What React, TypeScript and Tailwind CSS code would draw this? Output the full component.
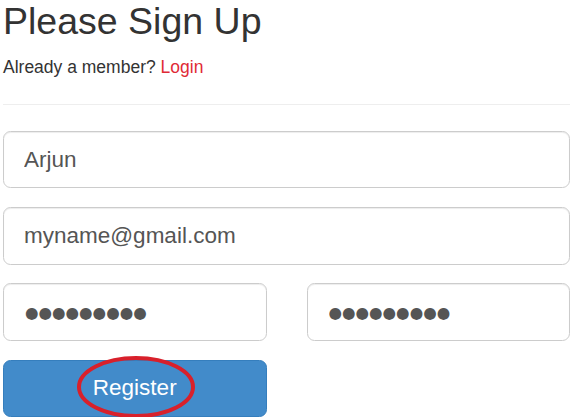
import React from "react";

export default function App() {
  const font = { fontFamily: '"Liberation Sans", Arial, Helvetica, sans-serif' };
  const inputCls =
    "block w-full h-[57.5px] px-[20px] text-[22.5px] text-[#555] border border-[#ccc] rounded-[7.5px] shadow-[inset_0_1px_1px_rgba(0,0,0,0.075)] outline-none bg-white";
  const pwCls =
    "block w-full h-[57.5px] pl-[21px] pr-[20px] pt-[2px] text-[15.5px] text-[#555] border border-[#ccc] rounded-[7.5px] shadow-[inset_0_1px_1px_rgba(0,0,0,0.075)] outline-none bg-white [font-family:'DejaVu_Sans',sans-serif]";
  return (
    <div className="w-[574px] h-[417px] overflow-hidden bg-white" style={font}>
      <div className="ml-[3px] w-[567px] pt-[1px]">
        <h2 className="text-[37.5px] leading-[41.25px] text-[#333] font-normal m-0">Please Sign Up</h2>
        <p className="mt-[12.5px] text-[17.5px] leading-[25px] text-[#333]">
          Already a member? <a className="text-[#df2a35]">Login</a>
        </p>
        <hr className="mt-[24px] border-0 border-t border-[#eee]" />
        <div className="mt-[26px] flex flex-col gap-[18.75px]">
          <input readOnly value="Arjun" className={inputCls} />
          <input readOnly value="myname@gmail.com" className={inputCls} />
          <div className="grid grid-cols-2 gap-[40px]">
            <input readOnly value="●●●●●●●●●" className={pwCls} />
            <input readOnly value="●●●●●●●●●" className={pwCls} />
          </div>
          <div className="grid grid-cols-2 gap-[40px]">
            <div className="relative">
              <button className="block w-full h-[57.5px] text-[22.5px] text-white bg-[#428bca] border border-[#357ebd] rounded-[7.5px]">
                Register
              </button>
              <svg className="absolute left-0 top-[-6px] pointer-events-none" width="264" height="70" viewBox="0 0 264 70">
                <ellipse cx="133" cy="33" rx="57" ry="29" fill="none" stroke="#d8202b" strokeWidth="4" />
              </svg>
            </div>
            <div />
          </div>
        </div>
      </div>
    </div>
  );
}
